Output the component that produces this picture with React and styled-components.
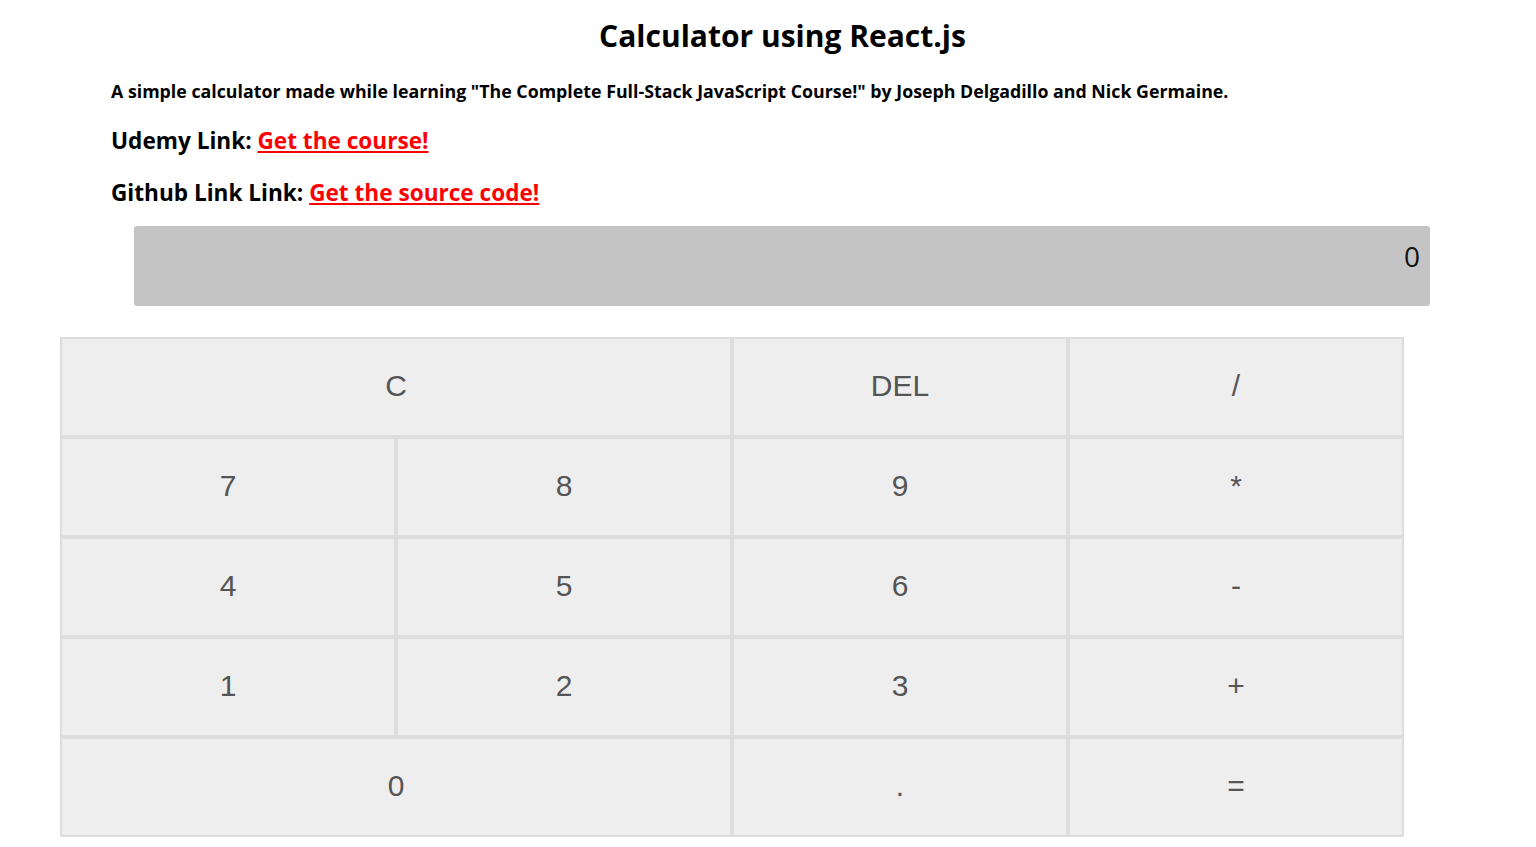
import React from "react";
import styled, { createGlobalStyle } from "styled-components";

const Global = createGlobalStyle`
  html, body { margin: 0; padding: 0; background: #fff; }
  body { font-family: "Open Sans", "Noto Sans", sans-serif; color: #000; }
`;

const Page = styled.div`
  width: 1536px;
  display: flex;
  flex-direction: column;
`;

const Title = styled.h1`
  margin: 16px 0 0 0;
  padding-left: 29px;
  text-align: center;
  font-size: 30px;
  line-height: 40px;
  font-weight: 700;
`;

const Intro = styled.div`
  padding-left: 111px;
  display: flex;
  flex-direction: column;
`;

const Description = styled.p`
  margin: 23px 0 0 0;
  font-size: 17.8px;
  line-height: 24px;
  font-weight: 700;
`;

const LinkLine = styled.p`
  margin: ${(p) => p.$top}px 0 0 0;
  font-size: 22.6px;
  line-height: 30px;
  font-weight: 700;
`;

const RedLink = styled.a`
  color: #f00;
  text-decoration: underline;
`;

const Display = styled.div`
  margin: 18px 0 0 134px;
  width: 1296px;
  height: 80px;
  background: #c4c4c4;
  border-radius: 3px;
  box-sizing: border-box;
  padding: 10px 10px 0 0;
  text-align: right;
  font-size: 28px;
  line-height: 40px;
  color: #111;
`;

const Keypad = styled.div`
  margin: 31px 0 0 60px;
  width: 1344px;
  display: grid;
  grid-template-columns: repeat(4, 336px);
  grid-auto-rows: 100px;
`;

const Key = styled.button`
  grid-column: span ${(p) => p.$span || 1};
  box-sizing: border-box;
  margin: 0;
  border: 2px solid #dddddd;
  background: #eeeeee;
  color: #555;
  font-family: "Liberation Sans", Arial, sans-serif;
  font-size: 30px;
  padding: 0 0 2px 0;
  display: flex;
  align-items: center;
  justify-content: center;
  cursor: pointer;
`;

const keys = [
  ["C", 2], ["DEL"], ["/"],
  ["7"], ["8"], ["9"], ["*"],
  ["4"], ["5"], ["6"], ["-"],
  ["1"], ["2"], ["3"], ["+"],
  ["0", 2], ["."], ["="],
];

export default function App() {
  return (
    <Page>
      <Global />
      <Title>Calculator using React.js</Title>
      <Intro>
        <Description>
          A simple calculator made while learning "The Complete Full-Stack JavaScript Course!" by Joseph Delgadillo and Nick Germaine.
        </Description>
        <LinkLine $top={23}>
          Udemy Link: <RedLink href="#">Get the course!</RedLink>
        </LinkLine>
        <LinkLine $top={22}>
          Github Link Link: <RedLink href="#">Get the source code!</RedLink>
        </LinkLine>
      </Intro>
      <Display>0</Display>
      <Keypad>
        {keys.map(([label, span]) => (
          <Key key={label} $span={span}>{label}</Key>
        ))}
      </Keypad>
    </Page>
  );
}
